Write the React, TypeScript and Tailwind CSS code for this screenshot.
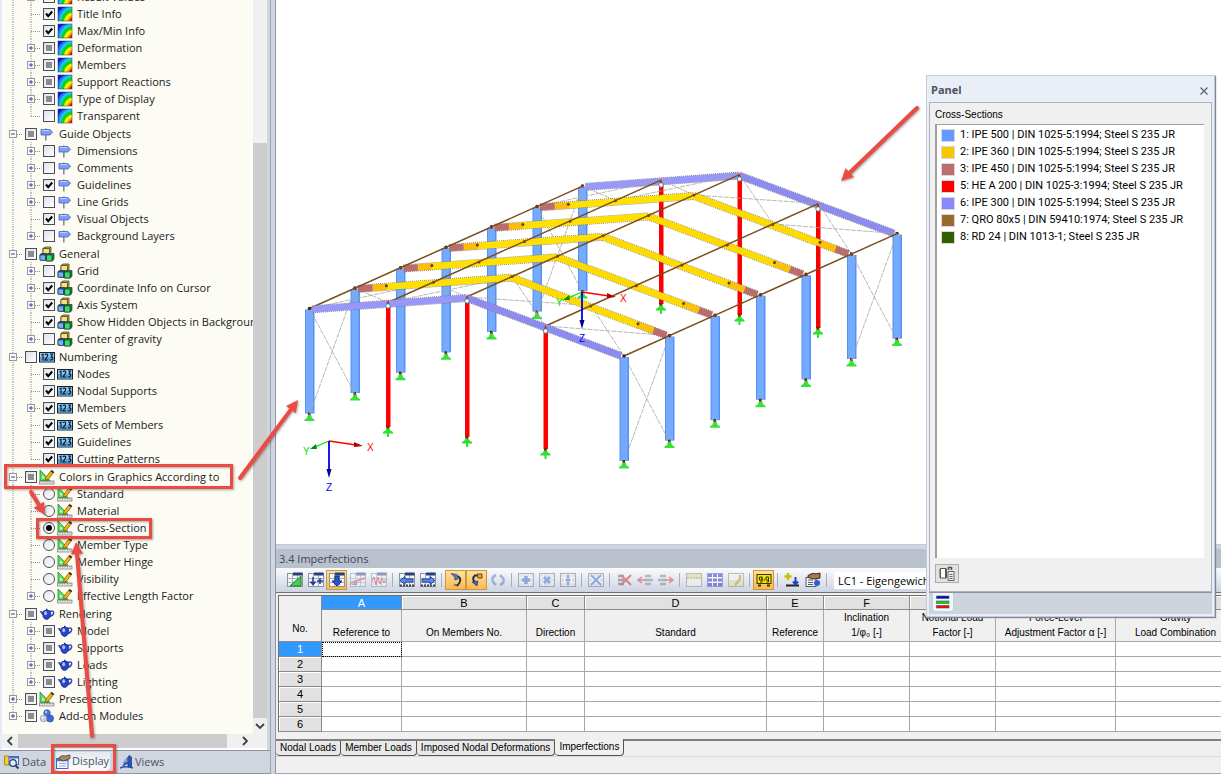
import React from 'react';

type Point = [number, number];
type CheckState = 'on' | 'off' | 'mixed' | 'radio' | 'radio-on';
type IconName = 'result' | 'sign' | 'cubes' | 'numbers' | 'ruler' | 'teapot' | 'addon';

interface TreeRow {
  label: string;
  level: 0 | 1;
  icon: IconName;
  state: CheckState;
  expander?: 'plus' | 'minus';
  last?: boolean;
}

const group = (
  label: string,
  icon: IconName,
  state: CheckState,
  expander: 'plus' | 'minus' = 'minus',
  last = false
): TreeRow => ({ label, level: 0, icon, state, expander, last });

const child = (
  label: string,
  icon: IconName,
  state: CheckState,
  expandable = false,
  last = false
): TreeRow => ({ label, level: 1, icon, state, expander: expandable ? 'plus' : undefined, last });

const treeRows: TreeRow[] = [
  child('Result Values', 'result', 'mixed', true),
  child('Title Info', 'result', 'on'),
  child('Max/Min Info', 'result', 'on'),
  child('Deformation', 'result', 'mixed', true),
  child('Members', 'result', 'mixed', true),
  child('Support Reactions', 'result', 'mixed', true),
  child('Type of Display', 'result', 'mixed', true),
  child('Transparent', 'result', 'off', false, true),
  group('Guide Objects', 'sign', 'mixed'),
  child('Dimensions', 'sign', 'off', true),
  child('Comments', 'sign', 'off', true),
  child('Guidelines', 'sign', 'on', true),
  child('Line Grids', 'sign', 'off', true),
  child('Visual Objects', 'sign', 'on'),
  child('Background Layers', 'sign', 'off', true, true),
  group('General', 'cubes', 'mixed'),
  child('Grid', 'cubes', 'off', true),
  child('Coordinate Info on Cursor', 'cubes', 'on', true),
  child('Axis System', 'cubes', 'on', true),
  child('Show Hidden Objects in Background', 'cubes', 'on'),
  child('Center of gravity', 'cubes', 'off', true, true),
  group('Numbering', 'numbers', 'off'),
  child('Nodes', 'numbers', 'on'),
  child('Nodal Supports', 'numbers', 'on'),
  child('Members', 'numbers', 'on', true),
  child('Sets of Members', 'numbers', 'on'),
  child('Guidelines', 'numbers', 'on'),
  child('Cutting Patterns', 'numbers', 'on', false, true),
  group('Colors in Graphics According to', 'ruler', 'mixed'),
  child('Standard', 'ruler', 'radio'),
  child('Material', 'ruler', 'radio'),
  child('Cross-Section', 'ruler', 'radio-on'),
  child('Member Type', 'ruler', 'radio'),
  child('Member Hinge', 'ruler', 'radio'),
  child('Visibility', 'ruler', 'radio'),
  child('Effective Length Factor', 'ruler', 'radio', true, true),
  group('Rendering', 'teapot', 'mixed'),
  child('Model', 'teapot', 'mixed', true),
  child('Supports', 'teapot', 'mixed', true),
  child('Loads', 'teapot', 'mixed', true),
  child('Lighting', 'teapot', 'mixed', true, true),
  group('Preselection', 'ruler', 'mixed', 'plus'),
  group('Add-on Modules', 'addon', 'mixed', 'plus', true),
];

const sections = [
  { color: 'bg-[#6699ff]', text: '1: IPE 500 | DIN 1025-5:1994; Steel S 235 JR' },
  { color: 'bg-[#f7c600]', text: '2: IPE 360 | DIN 1025-5:1994; Steel S 235 JR' },
  { color: 'bg-[#bb6e6e]', text: '3: IPE 450 | DIN 1025-5:1994; Steel S 235 JR' },
  { color: 'bg-[#ff0000]', text: '5: HE A 200 | DIN 1025-3:1994; Steel S 235 JR' },
  { color: 'bg-[#8888ff]', text: '6: IPE 300 | DIN 1025-5:1994; Steel S 235 JR' },
  { color: 'bg-[#996a2a]', text: '7: QRO 80x5 | DIN 59410:1974; Steel S 235 JR' },
  { color: 'bg-[#335f00]', text: '8: RD 24 | DIN 1013-1; Steel S 235 JR' },
];

const columns = [
  { letter: 'A', width: 'w-[80px]', lines: ['', 'Reference to'] },
  { letter: 'B', width: 'w-[125px]', lines: ['', 'On Members No.'] },
  { letter: 'C', width: 'w-[58px]', lines: ['', 'Direction'] },
  { letter: 'D', width: 'w-[182px]', lines: ['', 'Standard'] },
  { letter: 'E', width: 'w-[57px]', lines: ['', 'Reference'] },
  { letter: 'F', width: 'w-[86px]', lines: ['Inclination', '1/φ₀ [-]'] },
  { letter: 'G', width: 'w-[86px]', lines: ['Notional Load', 'Factor [-]'] },
  { letter: 'H', width: 'w-[120px]', lines: ['Force-Level', 'Adjustment Factor α [-]'] },
  { letter: 'I', width: 'w-[120px]', lines: ['Gravity', 'Load Combination'] },
];

/* ---------- tree icons ---------- */

const TreeIcon: React.FC<{ name: IconName }> = ({ name }) => {
  switch (name) {
    case 'result':
      return (
        <svg viewBox="0 0 16 16" className="h-4 w-4 shrink-0">
          <rect x="1" y="1" width="14" height="14" fill="#1212d8" />
          <path d="M15 1H9Q2 3 1 9V15H15Z" fill="#1e7bff" />
          <path d="M15 1H12Q3 4 2 15H15Z" fill="#17c8f0" />
          <path d="M15 3Q5 5 4 15H15Z" fill="#10d020" />
          <path d="M15 6.500Q8 8 7 15H15Z" fill="#f6f000" />
          <path d="M15 9.500Q11 11 10 15H15Z" fill="#ff9a00" />
          <path d="M15 11.500Q12.500 12.500 12 15H15Z" fill="#f01000" />
          <rect x="1" y="1" width="14" height="14" fill="none" stroke="#2a3a60" strokeOpacity="0.5" />
        </svg>
      );
    case 'sign':
      return (
        <svg viewBox="0 0 16 16" className="h-4 w-4 shrink-0">
          <path d="M6 2.500h1.600V14.500H6z" fill="#8a8a90" />
          <path d="M2 3.500H11L13.500 6.200L11 9H2Z" fill="#7d9cf8" stroke="#4e66b4" strokeWidth="0.800" />
          <path d="M3 4.600H10" stroke="#c3d3ff" />
        </svg>
      );
    case 'cubes':
      return (
        <svg viewBox="0 0 16 16" className="h-4 w-4 shrink-0" stroke="#25303a" strokeWidth="0.700">
          <path d="M4 2.500L6 1H12V6.500L10.500 8H4Z" fill="#d9a92c" />
          <path d="M4 2.500H10.500V8H4Z" fill="#ffe069" />
          <path d="M1 8.500L2.500 7.500H8V13L6.500 14.500L1 14Z" fill="#1c4fae" />
          <path d="M1 9H6.500V14.500L1 14Z" fill="#6fb4ff" />
          <path d="M7.500 9L9 7.500H15V13L13.500 15H7.500Z" fill="#0f8a33" />
          <path d="M7.500 9H13V15H7.500Z" fill="#35e062" />
        </svg>
      );
    case 'numbers':
      return (
        <svg viewBox="0 0 16 16" className="h-4 w-4 shrink-0">
          <rect x="0.500" y="3.500" width="15" height="9.500" fill="#8fc8ef" stroke="#10203a" />
          <path d="M1 8H15V12.500H1Z" fill="#5fa0d4" />
          <g fill="none" stroke="#0c1626" strokeWidth="1.100">
            <path d="M2.500 6L4 5.200V11.500" />
            <path d="M6 6Q6.200 5 7.500 5Q9 5.200 8.600 7L6 11H9.200" />
            <path d="M11 5H13.500L12.200 7.600Q14 8 13.600 9.700Q12.800 11.500 10.800 10.800" />
          </g>
        </svg>
      );
    case 'ruler':
      return (
        <svg viewBox="0 0 16 16" className="h-4 w-4 shrink-0">
          <path d="M1 1V11.500H11Z" fill="#5fdc5f" stroke="#238a2a" strokeWidth="0.800" />
          <path d="M3.200 6.500V9.300H6Z" fill="#f4fff4" />
          <path d="M12.500 1.200L15 3L9.500 10L6.500 11.300L7 8.200Z" fill="#f5b800" stroke="#6b4a10" strokeWidth="0.700" />
          <path d="M12.500 1.200L15 3L14 4.200L11.600 2.500Z" fill="#2c2c30" />
          <rect x="0.500" y="12" width="14.500" height="3" fill="#e8e8e8" stroke="#777" strokeWidth="0.700" />
          <path d="M3 12v1.500M5.500 12v1.500M8 12v1.500M10.500 12v1.500M13 12v1.500" stroke="#777" strokeWidth="0.700" />
        </svg>
      );
    case 'teapot':
      return (
        <svg viewBox="0 0 16 16" className="h-4 w-4 shrink-0">
          <path d="M11 5.500Q15 4 14.700 7Q14.200 9.500 11 10.500" fill="none" stroke="#2c4bb4" strokeWidth="1.400" />
          <path d="M4 9Q2.500 8.500 0.800 5.200L3 5Q3.500 6.500 4.800 7Z" fill="#2c4bb4" />
          <path d="M7 4.500V3Q7.700 2 8.500 3V4.500Z" fill="#23398f" />
          <path d="M4.500 5Q8 3 11 5Q12.800 8 11 11Q9.500 13.500 7.700 13.500Q5.500 13.500 4.200 11Q3 8 4.500 5Z" fill="#2746c8" stroke="#14237a" strokeWidth="0.700" />
          <ellipse cx="6.600" cy="7.200" rx="1.500" ry="2" fill="#a9c0ff" />
        </svg>
      );
    default:
      return (
        <svg viewBox="0 0 16 16" className="h-4 w-4 shrink-0">
          <circle cx="8" cy="5" r="3.300" fill="#4f74dd" stroke="#2a418e" strokeWidth="0.600" />
          <circle cx="11" cy="10.500" r="3.600" fill="#3f66d8" stroke="#2a418e" strokeWidth="0.600" />
          <circle cx="4.500" cy="10.500" r="3.300" fill="#c9cddb" stroke="#80889c" strokeWidth="0.600" />
          <circle cx="7" cy="4" r="1" fill="#cfdbff" />
          <circle cx="3.600" cy="9.500" r="1" fill="#fff" />
        </svg>
      );
  }
};

/* ---------- tree ---------- */

const Expander: React.FC<{ sign: 'plus' | 'minus' }> = ({ sign }) => (
  <>
    <rect x="5.500" y="5.500" width="7" height="7" fill="#fdfdfd" stroke="#999" />
    <path d="M7 9H11" stroke="#2e4a9c" />
    {sign === 'plus' && <path d="M9 7V11" stroke="#2e4a9c" />}
  </>
);

const guideClass = 'block h-[17px] w-[18px] shrink-0';

const Guide: React.FC<{ row: TreeRow }> = ({ row }) => {
  const drawing = (
    <svg viewBox="0 0 18 17" className={guideClass}>
      <path
        d={row.last ? 'M9 0V9' : 'M9 0V17'}
        stroke="#8f8f8f"
        strokeDasharray="1 1"
      />
      <path d="M9 9.500H18" stroke="#8f8f8f" strokeDasharray="1 1" />
      {row.expander && <Expander sign={row.expander} />}
    </svg>
  );

  if (!row.expander) return drawing;
  return (
    <button type="button" aria-label={`Toggle ${row.label}`} className="shrink-0">
      {drawing}
    </button>
  );
};

const CheckMark: React.FC<{ state: CheckState }> = ({ state }) => {
  if (state === 'radio' || state === 'radio-on') {
    return (
      <span className="grid h-3 w-3 shrink-0 place-items-center">
        <input
          type="radio"
          name="color-mode"
          defaultChecked={state === 'radio-on'}
          className="peer col-start-1 row-start-1 h-3 w-3 appearance-none rounded-full border border-[#4a4f5a] bg-linear-to-br from-[#e2e5ec] to-white"
        />
        <span className="pointer-events-none col-start-1 row-start-1 hidden h-1.5 w-1.5 rounded-full bg-black peer-checked:block" />
      </span>
    );
  }
  return (
    <span className="grid h-3 w-3 shrink-0 place-items-center">
      <input
        type="checkbox"
        defaultChecked={state === 'on'}
        ref={(el) => {
          if (el) el.indeterminate = state === 'mixed';
        }}
        className="peer col-start-1 row-start-1 h-3 w-3 appearance-none border border-[#4a4f5a] bg-linear-to-br from-[#dde1ea] to-white"
      />
      <svg viewBox="0 0 12 12" className="pointer-events-none col-start-1 row-start-1 hidden h-3 w-3 peer-checked:block">
        <path d="M3 5.500L5.200 8.200L9.200 3.500" fill="none" stroke="#000" strokeWidth="2" />
      </svg>
      <span className="pointer-events-none col-start-1 row-start-1 hidden h-1.5 w-1.5 bg-[#8c8c8c] peer-indeterminate:block" />
    </span>
  );
};

const Tree = () => (
  <div className="flex min-w-0 flex-1 flex-col justify-end overflow-hidden pb-2.5 pl-0.5">
    {treeRows.map((row, i) => (
      <div
        key={i}
        className={`flex h-[17px] shrink-0 items-center ${row.expander === 'minus' ? 'mt-px' : ''}`}
      >
        {row.level === 1 && (
          <svg viewBox="0 0 18 17" className={guideClass}>
            <path d="M9 0V17" stroke="#8f8f8f" strokeDasharray="1 1" />
          </svg>
        )}
        <Guide row={row} />
        <label className="ml-[3px] flex items-center whitespace-nowrap">
          <CheckMark state={row.state} />
          <span className="ml-0.5 mr-1">
            <TreeIcon name={row.icon} />
          </span>
          {row.label}
        </label>
      </div>
    ))}
  </div>
);

const Chevron: React.FC<{ d: string }> = ({ d }) => (
  <svg viewBox="0 0 10 10" className="h-2.5 w-2.5">
    <path d={d} fill="none" stroke="#404040" strokeWidth="1.800" />
  </svg>
);

const Navigator = () => (
  <aside className="flex w-[271px] shrink-0 flex-col border-r border-[#9aa2b2] bg-[#d0d5e0]">
    <div className="mr-[3px] flex min-h-0 flex-1 flex-col border-l-2 border-[#e4ebf7] bg-[#fcfcf4]">
      <div className="flex min-h-0 flex-1 text-[11px] leading-[17px] text-[#1a1a22]">
        <Tree />
        <div className="flex w-3.5 shrink-0 flex-col items-center bg-[#f0f0f0]">
          <div className="h-[143px]" />
          <div className="w-full flex-1 bg-[#cdcdcd]" />
          <button type="button" aria-label="Scroll down" className="grid h-4 place-items-center">
            <Chevron d="M1 3L5 7L9 3" />
          </button>
        </div>
      </div>
      <div className="flex h-[14px] shrink-0 items-stretch bg-[#f0f0f0]">
        <button type="button" aria-label="Scroll left" className="grid w-4 place-items-center">
          <Chevron d="M7 1L3 5L7 9" />
        </button>
        <div className="w-[209px] bg-[#cdcdcd]" />
        <button type="button" aria-label="Scroll right" className="ml-2.5 grid w-4 place-items-center">
          <Chevron d="M3 1L7 5L3 9" />
        </button>
      </div>
      <div className="h-[2px] bg-white" />
    </div>
    <div className="flex h-6 shrink-0 items-center border-b border-t border-[#8d95a5] px-1 text-[11px] text-[#4c5361]">
      <button type="button" className="flex w-[50px] items-center gap-0.5">
        <svg viewBox="0 0 16 16" className="h-4 w-4 shrink-0">
          <path d="M0.500 2H5L6 3.500H9V11H0.500Z" fill="#f7ca35" stroke="#a07a10" strokeWidth="0.800" />
          <rect x="5" y="2.500" width="9.500" height="8" fill="#eef4ff" stroke="#3e66b0" />
          <path d="M5 3.500H14.500" stroke="#3e78d0" strokeWidth="2" />
          <circle cx="9" cy="9" r="3.300" fill="#dceeff" stroke="#27406e" strokeWidth="1.200" />
          <path d="M11.500 11.500L14.500 14.500" stroke="#27406e" strokeWidth="2" />
        </svg>
        Data
      </button>
      <button
        type="button"
        className="flex h-5 w-[57px] items-center gap-px rounded-b-md border border-t-0 border-[#b9e4ea] bg-linear-to-b from-[#e4e8ef] to-white"
      >
        <svg viewBox="0 0 16 16" className="h-4 w-4 shrink-0">
          <rect x="1.500" y="4.500" width="11.500" height="10" fill="#f4f8ff" stroke="#3c68c0" />
          <path d="M1.500 6H13" stroke="#3c78e0" strokeWidth="2.500" />
          <path d="M4 9.500H11M4 12H11" stroke="#8da9dd" />
          <path d="M4 3.500Q7 0.500 10 2L15 1V4.500L11 6Q8 8 6 6L4 5Z" fill="#b08462" stroke="#4a3424" strokeWidth="0.700" />
        </svg>
        Display
      </button>
      <button type="button" className="ml-2 flex items-center">
        <svg viewBox="0 0 16 16" className="h-4 w-4 shrink-0">
          <path d="M10 1.500L12.500 3V13H9V9L4 12Z" fill="#2a52b8" stroke="#16307c" strokeWidth="0.700" />
          <path d="M3 9.500L8 3L8.500 8Z" fill="#7ba2ef" />
          <path d="M1 14Q7 11.500 14 14" fill="none" stroke="#2a52b8" strokeWidth="1.600" />
        </svg>
        Views
      </button>
    </div>
  </aside>
);

/* ---------- structural model ---------- */

const BAY: Point = [45.5, -20.4];
const FRAMES = [0, 1, 2, 3, 4, 5, 6];

const LEFT_EAVE: Point = [309.5, 308.500];
const LEFT_MID: Point = [388, 302.500];
const RIDGE: Point = [466.500, 297];
const RIGHT_MID: Point = [545.500, 326];
const RIGHT_EAVE: Point = [624, 356];

const at = (p: Point, i: number): Point => [p[0] + BAY[0] * i, p[1] + BAY[1] * i];
const lerp = (a: Point, b: Point, t: number): Point => [a[0] + (b[0] - a[0]) * t, a[1] + (b[1] - a[1]) * t];
const seg = (a: Point, b: Point) => `M${a[0]} ${a[1]}L${b[0]} ${b[1]}`;

const Support: React.FC<{ x: number; y: number; stub?: boolean }> = ({ x, y, stub }) => (
  <g>
    {stub ? (
      <path
        d={`M${x - 1.5} ${y}H${x + 1.5}L${x + 2} ${y + 3}L${x + 5} ${y + 5}V${y + 6.5}H${x + 1}V${y + 10}H${x - 1}V${y + 6.5}H${x - 5}V${y + 5}L${x - 2} ${y + 3}Z`}
        fill="#2fe02f"
      />
    ) : (
      <path
        d={`M${x - 1.5} ${y + 1}H${x + 1.5}L${x + 2.5} ${y + 4.5}L${x + 5} ${y + 6}V${y + 7.5}H${x - 5}V${y + 6}L${x - 2.5} ${y + 4.5}Z`}
        fill="#38e038"
      />
    )}
    <rect x={x - 1.5} y={y - 1} width="2.500" height="2.500" fill="#7a1c10" />
  </g>
);

const Column: React.FC<{ top: Point }> = ({ top: [x, y] }) => (
  <g>
    <rect x={x - 4.5} y={y + 1} width="9.500" height="104" fill="#5590f4" />
    <rect x={x - 3.5} y={y + 1} width="7" height="104" fill="#74abff" />
    <Support x={x} y={y + 105} />
  </g>
);

const Post: React.FC<{ top: Point; height: number }> = ({ top: [x, y], height }) => (
  <g>
    <rect x={x - 2} y={y} width="4.500" height={height} fill="#fb0000" />
    <Support x={x} y={y + height} stub />
  </g>
);

// thin dotted outline under a solid core; the section hangs below its axis
const Beam: React.FC<{ a: Point; b: Point; color: string }> = ({ a, b, color }) => (
  <g transform="translate(0 1)">
    <path d={seg(a, b)} stroke="#77776f" strokeWidth="8" strokeDasharray="1 1" />
    <path d={seg(a, b)} stroke={color} strokeWidth="6.600" />
  </g>
);

const YellowFrame: React.FC<{ i: number }> = ({ i }) => {
  const le = at(LEFT_EAVE, i);
  const ri = at(RIDGE, i);
  const re = at(RIGHT_EAVE, i);
  const dots = [lerp(le, ri, 0.2), lerp(le, ri, 0.5), ri, lerp(ri, re, 0.5), lerp(ri, re, 0.8)];
  return (
    <g>
      <Beam a={ri} b={lerp(ri, re, 0.8)} color="#fedb00" />
      <Beam a={lerp(ri, re, 0.8)} b={lerp(ri, re, 0.9)} color="#fdc106" />
      <Beam a={lerp(ri, re, 0.9)} b={lerp(ri, re, 0.98)} color="#bb6c6c" />
      <Beam a={lerp(le, ri, 0.2)} b={ri} color="#ffe000" />
      <Beam a={lerp(le, ri, 0.11)} b={lerp(le, ri, 0.2)} color="#fdbb0a" />
      <Beam a={lerp(le, ri, 0.02)} b={lerp(le, ri, 0.11)} color="#bb6c6c" />
      {dots.map(([x, y], n) => (
        <circle key={n} cx={x} cy={y} r="1.500" fill="#6b3a12" />
      ))}
      <circle cx={le[0]} cy={le[1]} r="1.800" fill="#5a1a10" />
      <circle cx={re[0]} cy={re[1]} r="1.800" fill="#5a1a10" />
    </g>
  );
};

const Gable: React.FC<{ i: number }> = ({ i }) => {
  const le = at(LEFT_EAVE, i);
  const ri = at(RIDGE, i);
  const re = at(RIGHT_EAVE, i);
  return (
    <g>
      <Beam a={ri} b={lerp(ri, re, 0.98)} color="#8c8cf0" />
      <Beam a={lerp(le, ri, 0.02)} b={ri} color="#9898fa" />
      <circle cx={le[0]} cy={le[1]} r="1.800" fill="#5a1a10" />
      <circle cx={re[0]} cy={re[1]} r="1.800" fill="#5a1a10" />
    </g>
  );
};

const bracing = [0, 5].flatMap((i) => {
  const roof = [LEFT_EAVE, LEFT_MID, RIDGE, RIGHT_MID, RIGHT_EAVE];
  const lines: string[] = [];
  for (let n = 0; n < roof.length - 1; n++) {
    lines.push(seg(at(roof[n], i), at(roof[n + 1], i + 1)));
    lines.push(seg(at(roof[n], i + 1), at(roof[n + 1], i)));
  }
  for (const eave of [LEFT_EAVE, RIGHT_EAVE]) {
    const a = at(eave, i);
    const b = at(eave, i + 1);
    lines.push(seg(a, [b[0], b[1] + 106]));
    lines.push(seg(b, [a[0], a[1] + 106]));
  }
  return lines;
});

const Axes: React.FC<{ x: number; y: number; zGap: number }> = ({ x, y, zGap }) => (
  <g className="font-['Liberation_Sans'] text-[10px]">
    <path d={`M${x} ${y}L${x + 27} ${y + 4}`} stroke="#ff0000" strokeWidth="1.300" />
    <path d={`M${x + 25} ${y + 1}L${x + 34} ${y + 5}L${x + 25} ${y + 6}Z`} fill="#b40000" />
    <path d={`M${x} ${y}L${x - 14} ${y + 6}`} stroke="#00e000" strokeWidth="1.300" />
    <path d={`M${x - 13} ${y + 3}L${x - 19} ${y + 8}L${x - 12} ${y + 8}Z`} fill="#009000" />
    <path d={`M${x} ${y}V${y + 29}`} stroke="#0000dd" strokeWidth="1.800" />
    <path d={`M${x - 2.500} ${y + 28}H${x + 2.500}L${x} ${y + 37}Z`} fill="#000090" />
    <text x={x + 38} y={y + 10} fill="#ff0000">X</text>
    <text x={x - 26} y={y + 14} fill="#00e000">Y</text>
    <text x={x - 3} y={y + zGap} fill="#0000ff">Z</text>
  </g>
);

const Model = () => (
  <svg viewBox="276 0 945 546" preserveAspectRatio="xMinYMin slice" className="h-full w-full" fill="none">
    {FRAMES.slice().reverse().map((i) => (
      <Column key={i} top={at(LEFT_EAVE, i)} />
    ))}
    <Post top={[661, 183]} height={121} />
    <Post top={[739.500, 177]} height={138} />
    <Post top={[818, 207]} height={121} />
    <Gable i={6} />
    <g>
      {[6, 5, 4, 3, 2, 1].map((i) => (
        <Column key={i} top={at(RIGHT_EAVE, i)} />
      ))}
    </g>
    {bracing.map((d, i) => (
      <path key={i} d={d} stroke="#a5a5a0" strokeWidth="0.800" strokeDasharray="5 1" />
    ))}
    {[5, 4, 3, 2, 1].map((i) => (
      <YellowFrame key={i} i={i} />
    ))}
    {[LEFT_EAVE, LEFT_MID, RIDGE, RIGHT_MID, RIGHT_EAVE].map((p, i) => (
      <path key={i} d={seg(p, at(p, 6))} stroke="#7a4e1c" strokeWidth="1.500" />
    ))}
    <Post top={[388, 304]} height={123} />
    <Post top={[467, 299]} height={138} />
    <Post top={[545.500, 328]} height={121} />
    <Column top={RIGHT_EAVE} />
    <Gable i={0} />
    {[
      [388, 306], [467, 301], [545.5, 331], [661, 185], [739.5, 179], [818, 209],
    ].map(([x, y]) => (
      <g key={x}>
        <path d={`M${x - 1.500} ${y - 2}L${x} ${y - 6}L${x + 1.500} ${y - 2}Z`} fill="#c81e14" />
        <circle cx={x} cy={y} r="2.200" fill="#fff" stroke="#1d8f8f" strokeWidth="0.800" />
      </g>
    ))}
    <Axes x={329} y={441} zGap={50} />
    <Axes x={582} y={292} zGap={50} />
  </svg>
);

/* ---------- table dock ---------- */

type ToolDef = { label: string; art: React.ReactNode; active?: boolean; dim?: boolean } | null;

const Sheet: React.FC = () => (
  <>
    <rect x="0.500" y="1.500" width="15" height="13" fill="#f3f5f9" stroke="#8a93a4" />
    <path d="M5.500 2V14M10.500 2V14M1 6.500H15M1 10.500H15" stroke="#a8afbc" />
    <path d="M6 2H15.500" stroke="#27407c" strokeWidth="3" />
  </>
);

const GridBox: React.FC = () => (
  <>
    <rect x="0.500" y="1.500" width="15" height="13" fill="#d8dce4" stroke="#6d7787" />
    <path d="M4.500 2V14M11.500 2V14M1 5.500H15M1 10.500H15" stroke="#fff" />
  </>
);

const tools: ToolDef[] = [
  { label: 'Edit', art: <><Sheet /><path d="M3 14L14 4V14Z" fill="#48d148" stroke="#1d7a2a" /></> },
  { label: 'Insert row', art: <><Sheet /><path d="M5 5V12M2.500 9.500L5 12.500L7.500 9.500M9 9H15M12 6V12" stroke="#203c96" strokeWidth="1.500" /></> },
  { label: 'Import', active: true, art: <><Sheet /><path d="M6 4H10V9H13L8 14L3 9H6Z" fill="#2a55c8" stroke="#16307c" /></> },
  { label: 'Result diagram', dim: true, art: <><Sheet /><path d="M1 11L15 6" stroke="#e05050" strokeWidth="2" /><path d="M1 13H7V10Z" fill="#4a70d0" /></> },
  { label: 'Oscillation', dim: true, art: <><Sheet /><path d="M1 9L3 5L5 13L7 5L9 12L11 6L13 11L15 7" stroke="#d03030" /></> },
  null,
  { label: 'Previous table', art: <><Sheet /><path d="M1 13.500H15" stroke="#3a3f4a" strokeWidth="2" strokeDasharray="2 1" /><path d="M1 8.500L6 4.500V7H14V10H6V12.500Z" fill="#5c8cf0" stroke="#203c96" /></> },
  { label: 'Next table', art: <><Sheet /><path d="M1 13.500H15" stroke="#3a3f4a" strokeWidth="2" strokeDasharray="2 1" /><path d="M15 8.500L10 4.500V7H2V10H10V12.500Z" fill="#5c8cf0" stroke="#203c96" /></> },
  null,
  { label: 'Select in graphic', active: true, art: <><path d="M10 4Q15 8 9 14" stroke="#26304a" strokeWidth="2" /><path d="M6 13H9" stroke="#26304a" /><path d="M3 1.500L9 2.500L10 7L7 8L6.500 5Z" fill="#4778e0" stroke="#26304a" strokeWidth="0.600" /></> },
  { label: 'Select in table', active: true, art: <><path d="M9 3.500H6Q3 6 5 9L7 12" stroke="#26304a" strokeWidth="2" /><path d="M8 2H13V6H9Z" fill="#e7a52e" stroke="#5a4a2a" /><path d="M3 10L9 9L8 14Z" fill="#3a62d0" stroke="#26304a" strokeWidth="0.600" /></> },
  { label: 'Synchronise', dim: true, art: <><path d="M6 3Q1 5 3 10L6 13M10 13Q15 11 13 6L10 3" stroke="#5a7cc4" strokeWidth="2.500" /></> },
  null,
  { label: 'Add', dim: true, art: <><GridBox /><path d="M8 4V12M4 8H12" stroke="#3d6ad6" strokeWidth="3.500" /></> },
  { label: 'Multiply', dim: true, art: <><GridBox /><path d="M5 5L11 11M11 5L5 11" stroke="#3d6ad6" strokeWidth="3" /></> },
  { label: 'Divide', dim: true, art: <><GridBox /><path d="M8 3V6M8 10V13M6 8H10" stroke="#3d6ad6" strokeWidth="2.500" /></> },
  null,
  { label: 'Clear', dim: true, art: <><GridBox /><path d="M3 3L13 13M13 3L3 13" stroke="#3d6ad6" strokeWidth="2" /></> },
  null,
  { label: 'Delete row', dim: true, art: <><path d="M2 4H8M2 8H8M2 12H8" stroke="#5a6170" strokeWidth="2.500" /><path d="M5 3L15 13M15 3L5 13" stroke="#d02020" strokeWidth="2" /></> },
  { label: 'Cut left', dim: true, art: <><path d="M8 4H14M8 8H16M8 12H14" stroke="#7d8492" strokeWidth="2.500" /><path d="M9 8H2M5 5L1 8L5 11" stroke="#d03030" strokeWidth="1.500" /></> },
  { label: 'Cut right', dim: true, art: <><path d="M2 4H8M0 8H8M2 12H8" stroke="#7d8492" strokeWidth="2.500" /><path d="M7 8H14M11 5L15 8L11 11" stroke="#d03030" strokeWidth="1.500" /></> },
  null,
  { label: 'Header row', dim: true, art: <><rect x="0.500" y="1.500" width="15" height="13" fill="#f4f4ee" stroke="#8a8a80" /><rect x="1" y="2" width="14" height="4" fill="#e4dc7a" /><path d="M1 6H15" stroke="#6a6a50" strokeDasharray="2 1" /></> },
  { label: 'Striped rows', dim: true, art: <><rect x="0.500" y="1.500" width="15" height="13" fill="#fff" stroke="#5a5ab0" /><path d="M1 3.500H15M1 8H15M1 12.500H15" stroke="#2828c0" strokeWidth="2.800" strokeDasharray="4 1" /></> },
  { label: 'Settings', dim: true, art: <><rect x="0.500" y="1.500" width="15" height="13" fill="#f4f4f4" stroke="#8a8a80" /><rect x="1" y="8" width="14" height="6" fill="#e4e09a" /><path d="M7 13L12 7V3" stroke="#b59410" strokeWidth="2.500" /></> },
  null,
  { label: 'Formula', active: true, art: <><rect x="1" y="2.500" width="14" height="9" fill="#f5e400" stroke="#3a3400" /><path d="M3.500 5H6V8H3.500ZM6 5V10H4M10 5H12.500V8H10ZM12.500 5V10H10.500M7.500 8H9" stroke="#3a3400" /><path d="M2 13.500H5M11 13.500H14" stroke="#3a3400" strokeWidth="2" /></> },
  null,
  { label: 'New load case', art: <><path d="M4 1V8M0.500 4.500H7.500" stroke="#c8c000" strokeWidth="2.500" /><path d="M2 13.500H15" stroke="#222" strokeWidth="2" /><path d="M11.500 5V12M9 9.500L11.500 12.500L14 9.500" stroke="#1f44c0" strokeWidth="2" /></> },
  { label: 'Edit load case', art: <><rect x="1" y="5.500" width="10" height="9" fill="#f0f3f8" stroke="#555c68" /><path d="M3 8H8M3 10.500H8M3 12.500H8" stroke="#555c68" /><path d="M3 3.500Q8 0 11 2L15 1V6L10 7Q6 7 3 5Z" fill="#a97852" stroke="#3a2a20" /><circle cx="12" cy="11" r="3" fill="#3160cc" /></> },
  null,
];

const Toolbar = () => (
  <div className="flex h-6 items-center overflow-hidden bg-linear-to-b from-[#fafbfd] to-[#cdd4e1] pl-2">
    {tools.map((tool, i) =>
      tool === null ? (
        <span key={i} className="flex w-[7px] shrink-0 justify-center">
          <span className="h-3.5 w-px bg-[#a8b0bf]" />
        </span>
      ) : (
        <button
          key={i}
          type="button"
          aria-label={tool.label}
          className={`grid h-5 w-[21px] shrink-0 place-items-center border ${
            tool.active ? 'border-[#c9993f] bg-linear-to-b from-[#ffdf9c] to-[#fbb84e]' : 'border-transparent'
          }`}
        >
          <svg viewBox="0 0 16 16" fill="none" className={`h-4 w-4 ${tool.dim ? 'opacity-50' : ''}`}>
            {tool.art}
          </svg>
        </button>
      )
    )}
    <select
      aria-label="Load case"
      defaultValue="lc1"
      className="ml-1 h-[17px] w-48 appearance-none bg-white px-1 font-['Open_Sans',sans-serif] text-[11px] leading-[17px] text-black"
    >
      <option value="lc1">LC1 - Eigengewicht</option>
    </select>
  </div>
);

const headCell = "border-b border-r border-[#8a8a8a] bg-[#e1e1e1] p-0 font-normal shadow-[inset_1px_1px_0_#ffffff]";
const smallText = "font-['Liberation_Sans',sans-serif] text-[10px]";

const ImperfectionTable = () => (
  <table className={`w-[964px] table-fixed border-separate border-spacing-0 border-l border-t border-[#6f6f6f] bg-white text-center leading-[15px] ${smallText}`}>
    <colgroup>
      <col className="w-[43px]" />
      {columns.map((c) => (
        <col key={c.letter} className={c.width} />
      ))}
      <col />
    </colgroup>
    <thead>
      <tr className="h-[14px] leading-[12px]">
        <th rowSpan={2} className="border-b border-r border-[#8a8a8a] bg-[#f0f0f0] p-0 pt-5 font-normal">
          No.
        </th>
        {columns.map((c) => (
          <th
            key={c.letter}
            className={`text-[11px] ${
              c.letter === 'A'
                ? 'border-b border-r border-[#8a8a8a] bg-[#3399ff] p-0 font-normal text-white'
                : headCell
            }`}
          >
            {c.letter}
          </th>
        ))}
        <th className={headCell} />
      </tr>
      <tr className="h-[31px]">
        {columns.map((c) => (
          <th
            key={c.letter}
            className="whitespace-nowrap border-b border-r border-[#a8a8a8] bg-[#f0f0f0] p-0 pb-px align-bottom font-normal"
          >
            {c.lines.map((line, n) => (
              <span key={n} className="block">
                {line}
              </span>
            ))}
          </th>
        ))}
        <th className="border-b border-[#a8a8a8] bg-[#f0f0f0] p-0" />
      </tr>
    </thead>
    <tbody>
      {[1, 2, 3, 4, 5, 6].map((no) => (
        <tr key={no} className="h-[15px] leading-[14px]">
          <th
            className={`text-[11px] ${
              no === 1
                ? 'border-b border-r border-[#8a8a8a] bg-[#3399ff] p-0 font-normal text-white'
                : headCell
            }`}
          >
            {no}
          </th>
          {columns.map((c) => (
            <td
              key={c.letter}
              className={`border-b border-r border-[#a8a8a8] p-0 ${
                no === 1 && c.letter === 'A' ? 'outline-1 -outline-offset-1 outline-dotted outline-black' : ''
              }`}
            />
          ))}
          <td className="border-b border-[#a8a8a8] p-0" />
        </tr>
      ))}
    </tbody>
  </table>
);

const TableDock = () => (
  <section className="shrink-0 border-t border-[#c2c8d4] bg-[#d0d5e0] pt-1 text-black">
    <h2 className="h-[19px] bg-[#b9c1cd] pl-[3px] text-[11px] leading-[19px] text-[#3f4653]">3.4 Imperfections</h2>
    <Toolbar />
    <div className="overflow-hidden border-t border-[#6f6f6f] bg-[#f0f0f0] pl-0.5 pt-0.5">
      <ImperfectionTable />
    </div>
    <div className={`bg-[#f0f0f0] pt-[7px] ${smallText}`}>
      <div className="flex items-start border-t-2 border-[#808080] leading-[14px]">
        {['Nodal Loads', 'Member Loads', 'Imposed Nodal Deformations', 'Imperfections'].map((tab) => (
          <button
            key={tab}
            type="button"
            className={`h-[15px] whitespace-nowrap rounded-b-sm border-b border-r border-[#555] px-1 ${
              tab === 'Imperfections' ? '-mt-0.5 h-[17px] bg-[#f0f0f0]' : 'bg-[#e8e8e8]'
            }`}
          >
            {tab}
          </button>
        ))}
      </div>
      <div className="h-[18px] border-b border-t border-b-[#a0a6b2] border-t-[#d9d9d9]" />
    </div>
  </section>
);

/* ---------- colour panel ---------- */

const ColorPanel = () => (
  <section className="absolute right-1.5 top-[75px] flex h-[542px] w-[289px] flex-col border border-[#c5ccd9] bg-[#eaeef7] p-0.5 shadow-[1px_1px_1px_#7c8698]">
    <header className="flex h-6 shrink-0 items-center justify-between pl-0.5 pt-px text-[11px] font-bold text-[#4b5262]">
      Panel
      <button type="button" aria-label="Close panel" className="mr-0.5 grid h-4 w-3 place-items-center">
        <svg viewBox="0 0 10 10" className="h-2.5 w-2.5">
          <path d="M1.500 1.500L8.500 8.500M8.500 1.500L1.500 8.500" stroke="#5a6070" strokeWidth="1.200" />
        </svg>
      </button>
    </header>
    <div className="flex min-h-0 flex-1 flex-col border border-[#aab2c2] bg-[#f0f0f0] pl-[5px] pr-[7px]">
      <h3 className={`pb-px pt-1 leading-[16px] text-black ${smallText}`}>Cross-Sections</h3>
      <ul className="min-h-0 flex-1 border-l-2 border-t border-[#a0a0a0] bg-white pl-1 pt-0.5 font-['Roboto',sans-serif]">
        {sections.map((s) => (
          <li key={s.text} className="flex h-[17px] items-center gap-[5px] whitespace-nowrap text-[11px] text-black">
            <span className={`h-[13px] w-3.5 border border-[#d8d8d8] ${s.color}`} />
            {s.text}
          </li>
        ))}
      </ul>
      <button
        type="button"
        aria-label="Copy colors"
        className="mb-2 mt-1.5 grid h-[19px] w-6 shrink-0 place-items-center border border-[#adadad] bg-[#e1e1e1]"
      >
        <svg viewBox="0 0 16 16" className="h-4 w-4">
          <rect x="0.500" y="2" width="7.500" height="10.500" rx="1.500" fill="#5c544e" />
          <rect x="2" y="3" width="4" height="8.500" fill="#fff" />
          <path d="M9.500 4V1.500H12.500V4" fill="none" stroke="#555" strokeWidth="1.500" />
          <path d="M9 5.500H15V14.500H9Z" fill="#eee" stroke="#666" />
          <path d="M10.500 8.500H13.500M10.500 10.500H13.500M10.500 12.500H13.500" stroke="#666" />
        </svg>
      </button>
    </div>
    <div className="flex h-[22px] shrink-0 border-t border-[#8a92a2] bg-[#ced3de] pl-[3px]">
      <button
        type="button"
        aria-label="Color scale"
        className="grid h-[19px] w-[22px] place-items-center rounded-b-sm border border-t-0 border-[#a9dfe2] bg-[#f2f5f9]"
      >
        <svg viewBox="0 0 14 14" className="h-3.5 w-3.5" stroke="#555" strokeWidth="0.600">
          <rect x="0.500" y="1" width="12.500" height="2.500" fill="#0000e0" />
          <rect x="0.500" y="6" width="12.500" height="2.500" fill="#00e000" />
          <rect x="0.500" y="10.500" width="12.500" height="2.500" fill="#ff0000" />
        </svg>
      </button>
    </div>
  </section>
);

/* ---------- red call-outs ---------- */

const Arrow: React.FC<{ from: Point; to: Point }> = ({ from, to }) => {
  const len = Math.hypot(to[0] - from[0], to[1] - from[1]);
  const ux = (to[0] - from[0]) / len;
  const uy = (to[1] - from[1]) / len;
  const bx = to[0] - ux * 12;
  const by = to[1] - uy * 12;
  return (
    <g>
      <path d={seg(from, [bx, by])} stroke="#ec4b43" strokeWidth="4" strokeLinecap="round" />
      <path d={`M${to[0]} ${to[1]}L${bx - uy * 6} ${by + ux * 6}L${bx + uy * 6} ${by - ux * 6}Z`} fill="#ec4b43" />
    </g>
  );
};

const Callouts = () => (
  <svg
    viewBox="0 0 1221 774"
    preserveAspectRatio="xMinYMin meet"
    className="pointer-events-none absolute inset-0 h-full w-full drop-shadow-[1px_1px_1px_rgba(0,0,0,0.350)]"
    fill="none"
  >
    <g stroke="#ec4b43" strokeWidth="3">
      <rect x="5.500" y="465.500" width="226" height="22" />
      <rect x="37.500" y="519.500" width="113" height="18" />
      <rect x="52.500" y="745.500" width="62" height="27" />
    </g>
    <Arrow from={[240, 478]} to={[298, 400]} />
    <Arrow from={[31, 492]} to={[45, 515]} />
    <Arrow from={[92, 736]} to={[76, 542]} />
    <Arrow from={[917, 108]} to={[841, 181]} />
  </svg>
);

export default function App() {
  return (
    <div className="relative flex h-screen overflow-hidden bg-[#d0d5e0] font-['Open_Sans','Noto_Sans',sans-serif]">
      <Navigator />
      <main className="ml-1 flex min-w-0 flex-1 flex-col border-l border-[#8e95a3]">
        <div className="min-h-0 flex-1 bg-white">
          <Model />
        </div>
        <TableDock />
      </main>
      <ColorPanel />
      <Callouts />
    </div>
  );
}
